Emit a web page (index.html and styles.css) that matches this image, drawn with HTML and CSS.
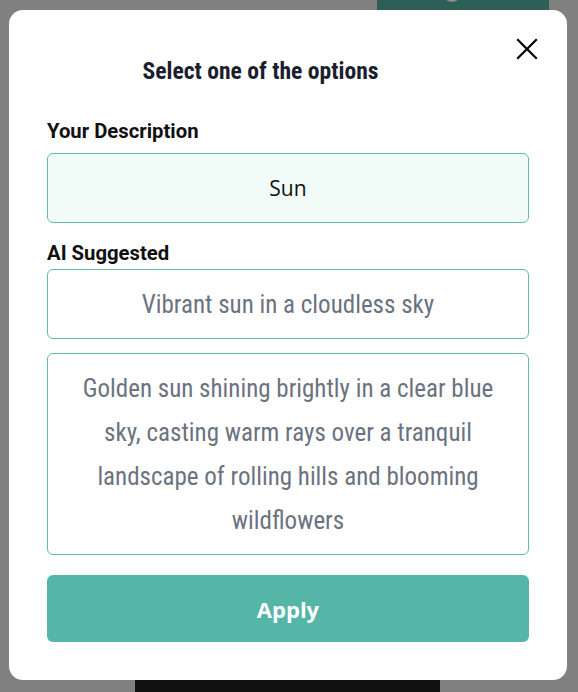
FILE: index.html
```html
<!DOCTYPE html>
<html lang="en">
<head>
<meta charset="utf-8">
<title>Select one of the options</title>
<link rel="stylesheet" href="styles.css">
</head>
<body>
<div class="page">
  <div class="bg-button"><span class="bg-dot"></span></div>
  <div class="bg-panel"></div>
</div>
<div class="modal">
  <button class="close" aria-label="Close">
    <svg viewBox="0 0 22 22" width="22" height="22"><path d="M2 2 L20 20 M20 2 L2 20" stroke="#000" stroke-width="2.2" fill="none" stroke-linecap="square"/></svg>
  </button>
  <h2 class="title">Select one of the options</h2>
  <div class="label label-first">Your Description</div>
  <div class="option option-selected">Sun</div>
  <div class="label label-second">AI Suggested</div>
  <div class="options">
    <div class="option option-ai">Vibrant sun in a cloudless sky</div>
    <div class="option option-ai">Golden sun shining brightly in a clear blue sky, casting warm rays over a tranquil landscape of rolling hills and blooming wildflowers</div>
  </div>
  <button class="apply">Apply</button>
</div>
</body>
</html>
```
FILE: styles.css
```css
* { box-sizing: border-box; }
html, body { margin: 0; padding: 0; }
body {
  width: 578px;
  height: 692px;
  background: #808080;
  overflow: hidden;
  position: relative;
  font-family: "Open Sans", "Noto Sans", sans-serif;
}
.page { position: absolute; inset: 0; }
.bg-button {
  position: absolute;
  left: 377px;
  top: -40px;
  width: 172px;
  height: 80px;
  background: #2e5f56;
  border-radius: 26px;
}
.bg-dot {
  position: absolute;
  left: 68px;
  top: 32px;
  width: 14px;
  height: 10px;
  border-radius: 50%;
  background: #8a8f8d;
}
.bg-panel {
  position: absolute;
  left: 135px;
  top: 650px;
  width: 305px;
  height: 60px;
  background: #111111;
  border-radius: 6px;
}
.modal {
  position: absolute;
  left: 9px;
  top: 10px;
  width: 558px;
  height: 670px;
  background: #ffffff;
  border-radius: 14px;
  padding: 46px 38px 0 38px;
  display: flex;
  flex-direction: column;
}
.close {
  position: absolute;
  top: 28px;
  right: 29px;
  width: 22px;
  height: 22px;
  padding: 0;
  border: 0;
  background: none;
  display: flex;
}
.title {
  margin: 0;
  padding-right: 55px;
  text-align: center;
  font-family: "Roboto", sans-serif;
  font-size: 23.6px;
  line-height: 30px;
  font-weight: 700;
  font-stretch: 75%;
  color: #1a1e2e;
}
.label {
  font-family: "Roboto", sans-serif;
  font-size: 20.3px;
  line-height: 24px;
  font-weight: 700;
  color: #111111;
}
.label-first { margin-top: 33px; margin-bottom: 10px; }
.label-second { margin-top: 18px; margin-bottom: 4px; }
.option {
  border: 1px solid #5fbcac;
  border-radius: 6px;
  padding: 13px 18px 11px;
  text-align: center;
  font-family: "Roboto", sans-serif;
  font-stretch: 75%;
  font-size: 25px;
  line-height: 44px;
  color: #6b7280;
  background: #ffffff;
}
.option-selected {
  background: #f1fbf8;
  color: #111111;
  font-family: "Open Sans", sans-serif;
  font-stretch: 100%;
  font-size: 21px;
  padding: 12px 18px;
}
.options {
  display: flex;
  flex-direction: column;
  gap: 14px;
}
.apply {
  margin-top: 20px;
  height: 67px;
  border: 0;
  border-radius: 6px;
  background: #55b6a8;
  color: #ffffff;
  font-family: "Open Sans", "Noto Sans", sans-serif;
  font-size: 22px;
  font-weight: 700;
  padding: 0;
}
```
